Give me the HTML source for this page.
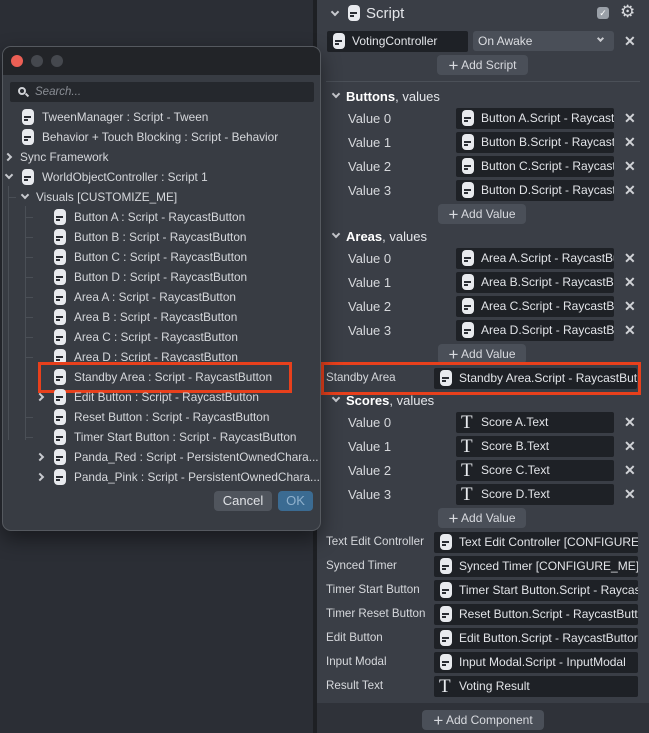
<!DOCTYPE html>
<html><head><style>
*{margin:0;padding:0;box-sizing:border-box}
body{width:649px;height:733px;background:#2b2e35;font-family:"Liberation Sans",sans-serif;font-size:12px;color:#d8dadf;position:relative;overflow:hidden}
.a{position:absolute;white-space:nowrap}
.ic{position:absolute;width:12px;height:16px;background:#e8eaee;border-radius:4px}
.ic:before{content:"";position:absolute;left:2px;top:7px;width:7px;height:2px;background:#2a2d33}
.ic:after{content:"";position:absolute;left:2px;top:10px;width:4px;height:2px;background:#2a2d33}
.fld{position:absolute;height:21px;background:#1e2126;border-radius:2px;overflow:hidden;white-space:nowrap;color:#e2e4e8;font-size:12px;line-height:21px}
.fld .ic{top:2px;left:6px}
.fld span{position:absolute;left:25px}
.T{position:absolute;left:5px;top:0;font-family:"Liberation Serif",serif;font-size:19px;color:#e8eaee;line-height:21px}
.x{position:absolute;font-size:14px;font-weight:bold;color:#d0d2d6}
.lbl{position:absolute;color:#d6d8dc;font-size:13px}
.sl{position:absolute;font-size:11.6px;color:#d6d8dc;white-space:nowrap}
.btn{position:absolute;height:20px;background:#4a4f58;border-radius:4px;color:#d8dadf;font-size:12px;line-height:20px;text-align:center}
.hdr{position:absolute;font-size:13px;color:#e4e6ea}
.hdr b{font-weight:bold;color:#fff}
.cd{position:absolute;width:6px;height:6px;border-right:2px solid #c8cacf;border-bottom:2px solid #c8cacf;transform:rotate(45deg)}
.cr{position:absolute;width:6px;height:6px;border-right:2px solid #c8cacf;border-bottom:2px solid #c8cacf;transform:rotate(-45deg)}
.row{position:absolute;font-size:11.8px;color:#d6d8dc;white-space:nowrap;line-height:20px}
.vl{position:absolute;width:1px;background:#4a4f56}
.hl{position:absolute;height:1px;background:#4a4f56}
</style></head><body>
<div class="a" style="left:313px;top:0;width:4px;height:733px;background:#1e2024"></div>
<div class="a" style="left:317px;top:0;width:332px;height:733px;background:#2f3239"></div>
<div class="a" style="left:317px;top:0;width:332px;height:703px;background:#3a3e46"></div>
<div class="cd" style="left:332px;top:9px"></div>
<div class="ic" style="left:348px;top:5px"></div>
<div class="hdr" style="left:366px;top:5px;font-size:15px">Script</div>
<div class="a" style="left:597px;top:7px;width:12px;height:12px;background:#9aa0a8;border-radius:3px;color:#fff;font-size:9px;text-align:center;line-height:12px">&#10003;</div>
<div class="a" style="left:620px;top:2px;font-size:17px;color:#d8dade">&#9881;</div>
<div class="fld" style="left:327px;top:31px;width:141px"><div class="ic"></div><span>VotingController</span></div>
<div class="a" style="left:473px;top:31px;width:141px;height:20px;background:#4a4f58;border-radius:3px;line-height:20px;padding-left:5px;color:#dcdee2">On Awake<div class="cd" style="left:125px;top:5px;width:5px;height:5px"></div></div>
<div class="x" style="left:624px;top:33px">&#10005;</div>
<div class="btn" style="left:437px;top:55px;width:91px"><span style="font-size:17px;vertical-align:-2px">+</span> Add Script</div>
<div class="a" style="left:326px;top:81px;width:314px;height:1px;background:#4b5058"></div>

<div class="cd" style="left:333px;top:91px"></div>
<div class="hdr" style="left:346px;top:89px"><b>Buttons</b>, values</div>
<div class="lbl" style="left:348px;top:111px">Value 0</div><div class="fld" style="left:456px;top:108px;width:158px"><div class="ic"></div><span>Button A.Script - Raycast</span></div><div class="x" style="left:624px;top:110px">&#10005;</div>
<div class="lbl" style="left:348px;top:135px">Value 1</div><div class="fld" style="left:456px;top:132px;width:158px"><div class="ic"></div><span>Button B.Script - Raycast</span></div><div class="x" style="left:624px;top:134px">&#10005;</div>
<div class="lbl" style="left:348px;top:159px">Value 2</div><div class="fld" style="left:456px;top:156px;width:158px"><div class="ic"></div><span>Button C.Script - Raycast</span></div><div class="x" style="left:624px;top:158px">&#10005;</div>
<div class="lbl" style="left:348px;top:183px">Value 3</div><div class="fld" style="left:456px;top:180px;width:158px"><div class="ic"></div><span>Button D.Script - Raycast</span></div><div class="x" style="left:624px;top:182px">&#10005;</div>
<div class="btn" style="left:438px;top:204px;width:88px"><span style="font-size:17px;vertical-align:-2px">+</span> Add Value</div>

<div class="cd" style="left:333px;top:231px"></div>
<div class="hdr" style="left:346px;top:229px"><b>Areas</b>, values</div>
<div class="lbl" style="left:348px;top:251px">Value 0</div><div class="fld" style="left:456px;top:248px;width:158px"><div class="ic"></div><span>Area A.Script - RaycastBu</span></div><div class="x" style="left:624px;top:250px">&#10005;</div>
<div class="lbl" style="left:348px;top:275px">Value 1</div><div class="fld" style="left:456px;top:272px;width:158px"><div class="ic"></div><span>Area B.Script - RaycastBu</span></div><div class="x" style="left:624px;top:274px">&#10005;</div>
<div class="lbl" style="left:348px;top:299px">Value 2</div><div class="fld" style="left:456px;top:296px;width:158px"><div class="ic"></div><span>Area C.Script - RaycastBu</span></div><div class="x" style="left:624px;top:298px">&#10005;</div>
<div class="lbl" style="left:348px;top:323px">Value 3</div><div class="fld" style="left:456px;top:320px;width:158px"><div class="ic"></div><span>Area D.Script - RaycastBu</span></div><div class="x" style="left:624px;top:322px">&#10005;</div>
<div class="btn" style="left:438px;top:344px;width:88px"><span style="font-size:17px;vertical-align:-2px">+</span> Add Value</div>

<div class="sl" style="left:326px;top:371px">Standby Area</div>
<div class="fld" style="left:434px;top:368px;width:203px"><div class="ic"></div><span>Standby Area.Script - RaycastButt</span></div>
<div class="a" style="left:321px;top:362px;width:320px;height:33px;border:3px solid #e8401c"></div>

<div class="cd" style="left:333px;top:395px"></div>
<div class="hdr" style="left:346px;top:393px"><b>Scores</b>, values</div>
<div class="lbl" style="left:348px;top:415px">Value 0</div><div class="fld" style="left:456px;top:412px;width:158px"><div class="T">T</div><span>Score A.Text</span></div><div class="x" style="left:624px;top:414px">&#10005;</div>
<div class="lbl" style="left:348px;top:439px">Value 1</div><div class="fld" style="left:456px;top:436px;width:158px"><div class="T">T</div><span>Score B.Text</span></div><div class="x" style="left:624px;top:438px">&#10005;</div>
<div class="lbl" style="left:348px;top:463px">Value 2</div><div class="fld" style="left:456px;top:460px;width:158px"><div class="T">T</div><span>Score C.Text</span></div><div class="x" style="left:624px;top:462px">&#10005;</div>
<div class="lbl" style="left:348px;top:487px">Value 3</div><div class="fld" style="left:456px;top:484px;width:158px"><div class="T">T</div><span>Score D.Text</span></div><div class="x" style="left:624px;top:486px">&#10005;</div>
<div class="btn" style="left:438px;top:508px;width:88px"><span style="font-size:17px;vertical-align:-2px">+</span> Add Value</div>

<div class="sl" style="left:326px;top:535px">Text Edit Controller</div><div class="fld" style="left:434px;top:532px;width:204px"><div class="ic"></div><span>Text Edit Controller [CONFIGURE_</span></div>
<div class="sl" style="left:326px;top:559px">Synced Timer</div><div class="fld" style="left:434px;top:556px;width:204px"><div class="ic"></div><span>Synced Timer [CONFIGURE_ME].S</span></div>
<div class="sl" style="left:326px;top:583px">Timer Start Button</div><div class="fld" style="left:434px;top:580px;width:204px"><div class="ic"></div><span>Timer Start Button.Script - Raycas</span></div>
<div class="sl" style="left:326px;top:607px">Timer Reset Button</div><div class="fld" style="left:434px;top:604px;width:204px"><div class="ic"></div><span>Reset Button.Script - RaycastButt</span></div>
<div class="sl" style="left:326px;top:631px">Edit Button</div><div class="fld" style="left:434px;top:628px;width:204px"><div class="ic"></div><span>Edit Button.Script - RaycastButtor</span></div>
<div class="sl" style="left:326px;top:655px">Input Modal</div><div class="fld" style="left:434px;top:652px;width:204px"><div class="ic"></div><span>Input Modal.Script - InputModal</span></div>
<div class="sl" style="left:326px;top:679px">Result Text</div><div class="fld" style="left:434px;top:676px;width:204px"><div class="T">T</div><span>Voting Result</span></div>
<div class="btn" style="left:422px;top:710px;width:122px"><span style="font-size:17px;vertical-align:-2px">+</span> Add Component</div>

<div class="a" style="left:2px;top:46px;width:319px;height:485px;background:#383c43;border:1px solid #55595f;border-radius:9px;overflow:hidden;box-shadow:0 8px 20px rgba(0,0,0,.45)">
 <div class="a" style="left:0;top:0;width:319px;height:28px;background:#222428"></div>
 <div class="a" style="left:8px;top:8px;width:12px;height:12px;border-radius:6px;background:#ec5f55"></div>
 <div class="a" style="left:28px;top:8px;width:12px;height:12px;border-radius:6px;background:#45484e"></div>
 <div class="a" style="left:48px;top:8px;width:12px;height:12px;border-radius:6px;background:#45484e"></div>
 <div class="a" style="left:7px;top:35px;width:304px;height:20px;background:#25282d;border-radius:2px;color:#8a8e95;font-style:italic;font-size:11.5px;line-height:20px;padding-left:25px">Search...<span style="position:absolute;left:8px;top:5px;width:8px;height:8px;border:2px solid #d0d2d6;border-radius:50%"></span><span style="position:absolute;left:15px;top:12px;width:4px;height:2px;background:#d0d2d6;transform:rotate(45deg)"></span></div>
</div>
<div class="vl" style="left:8px;top:186px;height:254px"></div>
<div class="vl" style="left:25px;top:206px;height:234px"></div>
<div class="hl" style="left:25px;top:217px;width:8px"></div><div class="hl" style="left:25px;top:237px;width:8px"></div><div class="hl" style="left:25px;top:257px;width:8px"></div><div class="hl" style="left:25px;top:277px;width:8px"></div><div class="hl" style="left:25px;top:297px;width:8px"></div><div class="hl" style="left:25px;top:317px;width:8px"></div><div class="hl" style="left:25px;top:337px;width:8px"></div><div class="hl" style="left:25px;top:357px;width:8px"></div><div class="hl" style="left:25px;top:417px;width:8px"></div><div class="hl" style="left:25px;top:437px;width:8px"></div>
<div class="hl" style="left:8px;top:197px;width:8px"></div>

<div class="ic" style="left:22px;top:109px"></div><div class="row" style="left:42px;top:107px">TweenManager : Script - Tween</div>
<div class="ic" style="left:22px;top:129px"></div><div class="row" style="left:42px;top:127px">Behavior + Touch Blocking : Script - Behavior</div>
<div class="cr" style="left:5px;top:154px"></div><div class="row" style="left:20px;top:147px">Sync Framework</div>
<div class="cd" style="left:6px;top:172px"></div><div class="ic" style="left:22px;top:169px"></div><div class="row" style="left:42px;top:167px">WorldObjectController : Script 1</div>
<div class="cd" style="left:22px;top:192px"></div><div class="row" style="left:36px;top:187px">Visuals [CUSTOMIZE_ME]</div>
<div class="ic" style="left:54px;top:209px"></div><div class="row" style="left:74px;top:207px">Button A : Script - RaycastButton</div>
<div class="ic" style="left:54px;top:229px"></div><div class="row" style="left:74px;top:227px">Button B : Script - RaycastButton</div>
<div class="ic" style="left:54px;top:249px"></div><div class="row" style="left:74px;top:247px">Button C : Script - RaycastButton</div>
<div class="ic" style="left:54px;top:269px"></div><div class="row" style="left:74px;top:267px">Button D : Script - RaycastButton</div>
<div class="ic" style="left:54px;top:289px"></div><div class="row" style="left:74px;top:287px">Area A : Script - RaycastButton</div>
<div class="ic" style="left:54px;top:309px"></div><div class="row" style="left:74px;top:307px">Area B : Script - RaycastButton</div>
<div class="ic" style="left:54px;top:329px"></div><div class="row" style="left:74px;top:327px">Area C : Script - RaycastButton</div>
<div class="ic" style="left:54px;top:349px"></div><div class="row" style="left:74px;top:347px">Area D : Script - RaycastButton</div>
<div class="ic" style="left:54px;top:369px"></div><div class="row" style="left:74px;top:367px">Standby Area : Script - RaycastButton</div>
<div class="a" style="left:38px;top:362px;width:254px;height:31px;border:3px solid #e8401c"></div>
<div class="cr" style="left:37px;top:394px"></div><div class="ic" style="left:54px;top:389px"></div><div class="row" style="left:74px;top:387px">Edit Button : Script - RaycastButton</div>
<div class="ic" style="left:54px;top:409px"></div><div class="row" style="left:74px;top:407px">Reset Button : Script - RaycastButton</div>
<div class="ic" style="left:54px;top:429px"></div><div class="row" style="left:74px;top:427px">Timer Start Button : Script - RaycastButton</div>
<div class="cr" style="left:37px;top:454px"></div><div class="ic" style="left:54px;top:449px"></div><div class="row" style="left:74px;top:447px">Panda_Red : Script - PersistentOwnedChara...</div>
<div class="cr" style="left:37px;top:474px"></div><div class="ic" style="left:54px;top:469px"></div><div class="row" style="left:74px;top:467px">Panda_Pink : Script - PersistentOwnedChara...</div>
<div class="a" style="left:214px;top:491px;width:58px;height:20px;background:#50555d;border-radius:4px;text-align:center;line-height:20px;font-size:13px;color:#dfe1e5">Cancel</div>
<div class="a" style="left:278px;top:491px;width:35px;height:20px;background:#3b6b92;border-radius:4px;text-align:center;line-height:20px;font-size:13px;color:#8fb0cc">OK</div>
</body></html>
